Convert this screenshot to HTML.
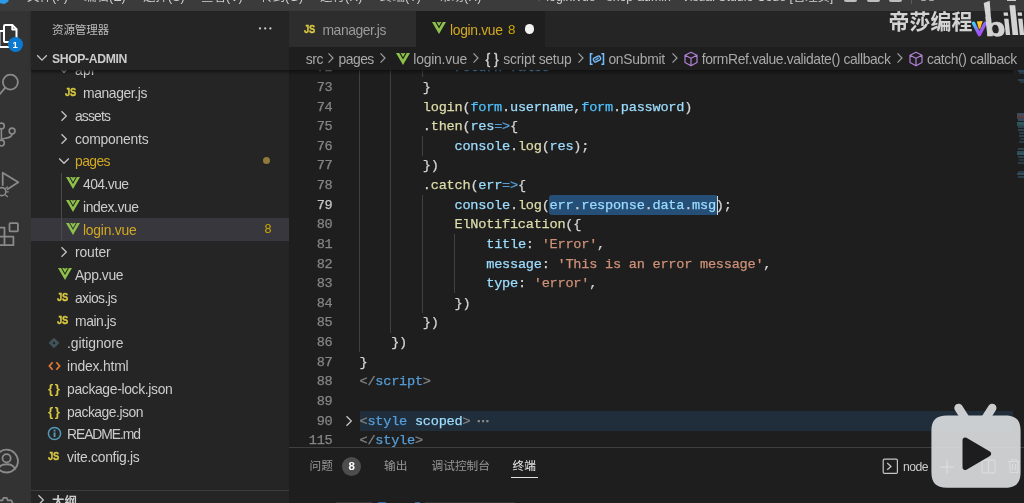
<!DOCTYPE html>
<html lang="zh-CN">
<head>
<meta charset="utf-8">
<title>login.vue - shop-admin - Visual Studio Code</title>
<style>
*{box-sizing:border-box;margin:0;padding:0}
html,body{width:1024px;height:503px;overflow:hidden;background:#1e1e1e}
body{position:relative;will-change:transform;font-family:"Liberation Sans","Noto Sans CJK SC",sans-serif;color:#ccc;-webkit-font-smoothing:antialiased}
.abs{position:absolute}
#titlebar{position:absolute;left:0;top:0;width:1024px;height:11px;background:#3b3b3c;overflow:hidden}
#titlebar span{position:absolute;top:-10.8px;font-size:12.5px;line-height:16px;color:#d0d0d0;white-space:nowrap}
#activity{position:absolute;left:0;top:11px;width:31.2px;height:492px;background:#333334;overflow:hidden}
#sidebar{position:absolute;left:31.200px;top:11px;width:257.800px;height:492px;background:#252526;overflow:hidden}
#tabs{position:absolute;left:289px;top:11px;width:735px;height:36px;background:#252526}
.tab{position:absolute;top:0;height:36px}
#crumbs{position:absolute;left:289px;top:47px;width:735px;height:23px;background:#1e1e1e;font-size:14.6px;color:#a9a9a9;white-space:nowrap}
#crumbs span{position:absolute;top:0;line-height:24px}
#crumbs svg{position:absolute}
.ic{position:absolute}
.js{font:bold 11.2px/16px "Liberation Sans",sans-serif;color:#d8c840;letter-spacing:-0.3px;transform:scaleX(.84);transform-origin:0 50%;-webkit-text-stroke:0.35px}
.json{font:bold 13.4px/18px "Liberation Sans",sans-serif;color:#d8c840;letter-spacing:1.600px}
.tl{position:absolute;font-size:13.9px;line-height:22px;white-space:nowrap}
.sel{position:absolute;left:31.200px;width:257.800px;height:22.75px;background:#37373d}
#code{position:absolute;left:0;top:0;width:1024px;height:447px;overflow:hidden}
.cl,.ln{position:absolute;font-family:"Liberation Mono","DejaVu Sans Mono",monospace;font-size:13.6px;letter-spacing:-0.2417px;line-height:19.62px;white-space:pre;color:#d4d4d4;height:19.62px;-webkit-text-stroke:0.25px}
.ln{left:289px;width:43.5px;text-align:right;color:#858585}
.ln.act{color:#c6c6c6}
.guide{position:absolute;width:1px;background:#404040}
.k{color:#569cd6}.f{color:#dcdcaa}.v{color:#9cdcfe}.c{color:#4fc1ff}.s{color:#ce9178}.p{color:#d4d4d4}.t{color:#808080}
.cur{display:inline-block;width:1.5px;height:19px;background:#d8d8d8;vertical-align:top;margin:0.3px -0.2px 0 -1.3px;position:relative;left:2px}
.selx{background:#264f78;border-radius:3px;padding:2.5px 2px 2.5px 1px;margin:0 -2px 0 -1px}
.fold{color:#8a8a8a;letter-spacing:-3.9px;margin-left:4.5px;font-weight:bold}
.foldbg{position:absolute;left:359.5px;width:653.5px;background:#202d3a}
#panel{position:absolute;left:289px;top:447px;width:735px;height:56px;background:#1e1e1e;border-top:1px solid #3f3f40}
#panel .pt{position:absolute;top:8.300px;font-size:11.7px;line-height:20px;color:#969696;white-space:nowrap}
</style>
</head>
<body>

<!-- ============ editor code ============ -->
<div id="code">
<div class="guide" style="left:358.80px;top:57.87px;height:19.62px"></div>
<div class="guide" style="left:390.48px;top:57.87px;height:19.62px"></div>
<div class="guide" style="left:422.16px;top:57.87px;height:19.62px"></div>
<div class="ln" style="top:58.37px">72</div>
<div class="cl" style="left:454.54px;top:58.37px"><span class="k">return</span> <span class="k">false</span></div>
<div class="guide" style="left:358.80px;top:77.49px;height:19.62px"></div>
<div class="guide" style="left:390.48px;top:77.49px;height:19.62px"></div>
<div class="ln" style="top:77.99px">73</div>
<div class="cl" style="left:422.86px;top:77.99px"><span class="p">}</span></div>
<div class="guide" style="left:358.80px;top:97.11px;height:19.62px"></div>
<div class="guide" style="left:390.48px;top:97.11px;height:19.62px"></div>
<div class="ln" style="top:97.61px">74</div>
<div class="cl" style="left:422.86px;top:97.61px"><span class="f">login</span><span class="p">(</span><span class="c">form</span><span class="p">.</span><span class="v">username</span><span class="p">,</span><span class="c">form</span><span class="p">.</span><span class="v">password</span><span class="p">)</span></div>
<div class="guide" style="left:358.80px;top:116.73px;height:19.62px"></div>
<div class="guide" style="left:390.48px;top:116.73px;height:19.62px"></div>
<div class="ln" style="top:117.23px">75</div>
<div class="cl" style="left:422.86px;top:117.23px"><span class="p">.</span><span class="f">then</span><span class="p">(</span><span class="v">res</span><span class="k">=&gt;</span><span class="p">{</span></div>
<div class="guide" style="left:358.80px;top:136.35px;height:19.62px"></div>
<div class="guide" style="left:390.48px;top:136.35px;height:19.62px"></div>
<div class="guide" style="left:422.16px;top:136.35px;height:19.62px"></div>
<div class="ln" style="top:136.85px">76</div>
<div class="cl" style="left:454.54px;top:136.85px"><span class="v">console</span><span class="p">.</span><span class="f">log</span><span class="p">(</span><span class="v">res</span><span class="p">);</span></div>
<div class="guide" style="left:358.80px;top:155.97px;height:19.62px"></div>
<div class="guide" style="left:390.48px;top:155.97px;height:19.62px"></div>
<div class="ln" style="top:156.47px">77</div>
<div class="cl" style="left:422.86px;top:156.47px"><span class="p">})</span></div>
<div class="guide" style="left:358.80px;top:175.59px;height:19.62px"></div>
<div class="guide" style="left:390.48px;top:175.59px;height:19.62px"></div>
<div class="ln" style="top:176.09px">78</div>
<div class="cl" style="left:422.86px;top:176.09px"><span class="p">.</span><span class="f">catch</span><span class="p">(</span><span class="v">err</span><span class="k">=&gt;</span><span class="p">{</span></div>
<div class="guide" style="left:358.80px;top:195.21px;height:19.62px"></div>
<div class="guide" style="left:390.48px;top:195.21px;height:19.62px"></div>
<div class="guide" style="left:422.16px;top:195.21px;height:19.62px"></div>
<div class="ln act" style="top:195.71px">79</div>
<div class="cl" style="left:454.54px;top:195.71px"><span class="v">console</span><span class="p">.</span><span class="f">log</span><span class="p">(</span><span class="selx"><span class="v">err</span><span class="p">.</span><span class="v">response</span><span class="p">.</span><span class="v">data</span><span class="p">.</span><span class="v">msg</span></span><span class="cur"></span><span class="p">);</span></div>
<div class="guide" style="left:358.80px;top:214.83px;height:19.62px"></div>
<div class="guide" style="left:390.48px;top:214.83px;height:19.62px"></div>
<div class="guide" style="left:422.16px;top:214.83px;height:19.62px"></div>
<div class="ln" style="top:215.33px">80</div>
<div class="cl" style="left:454.54px;top:215.33px"><span class="f">ElNotification</span><span class="p">({</span></div>
<div class="guide" style="left:358.80px;top:234.45px;height:19.62px"></div>
<div class="guide" style="left:390.48px;top:234.45px;height:19.62px"></div>
<div class="guide" style="left:422.16px;top:234.45px;height:19.62px"></div>
<div class="guide" style="left:453.84px;top:234.45px;height:19.62px"></div>
<div class="ln" style="top:234.95px">81</div>
<div class="cl" style="left:486.22px;top:234.95px"><span class="v">title</span><span class="p">: </span><span class="s">&#x27;Error&#x27;</span><span class="p">,</span></div>
<div class="guide" style="left:358.80px;top:254.07px;height:19.62px"></div>
<div class="guide" style="left:390.48px;top:254.07px;height:19.62px"></div>
<div class="guide" style="left:422.16px;top:254.07px;height:19.62px"></div>
<div class="guide" style="left:453.84px;top:254.07px;height:19.62px"></div>
<div class="ln" style="top:254.57px">82</div>
<div class="cl" style="left:486.22px;top:254.57px"><span class="v">message</span><span class="p">: </span><span class="s">&#x27;This is an error message&#x27;</span><span class="p">,</span></div>
<div class="guide" style="left:358.80px;top:273.69px;height:19.62px"></div>
<div class="guide" style="left:390.48px;top:273.69px;height:19.62px"></div>
<div class="guide" style="left:422.16px;top:273.69px;height:19.62px"></div>
<div class="guide" style="left:453.84px;top:273.69px;height:19.62px"></div>
<div class="ln" style="top:274.19px">83</div>
<div class="cl" style="left:486.22px;top:274.19px"><span class="v">type</span><span class="p">: </span><span class="s">&#x27;error&#x27;</span><span class="p">,</span></div>
<div class="guide" style="left:358.80px;top:293.31px;height:19.62px"></div>
<div class="guide" style="left:390.48px;top:293.31px;height:19.62px"></div>
<div class="guide" style="left:422.16px;top:293.31px;height:19.62px"></div>
<div class="ln" style="top:293.81px">84</div>
<div class="cl" style="left:454.54px;top:293.81px"><span class="p">})</span></div>
<div class="guide" style="left:358.80px;top:312.93px;height:19.62px"></div>
<div class="guide" style="left:390.48px;top:312.93px;height:19.62px"></div>
<div class="ln" style="top:313.43px">85</div>
<div class="cl" style="left:422.86px;top:313.43px"><span class="p">})</span></div>
<div class="guide" style="left:358.80px;top:332.55px;height:19.62px"></div>
<div class="ln" style="top:333.05px">86</div>
<div class="cl" style="left:391.18px;top:333.05px"><span class="p">})</span></div>
<div class="ln" style="top:352.67px">87</div>
<div class="cl" style="left:359.50px;top:352.67px"><span class="p">}</span></div>
<div class="ln" style="top:372.29px">88</div>
<div class="cl" style="left:359.50px;top:372.29px"><span class="t">&lt;/</span><span class="k">script</span><span class="t">&gt;</span></div>
<div class="ln" style="top:391.91px">89</div>
<div class="foldbg" style="top:411.03px;height:19.62px"></div>
<svg class="ic" style="left:344px;top:414.84px" width="10" height="12" viewBox="0 0 10 12"><path d="M2.5 1.2L7.3 6 2.5 10.8" fill="none" stroke="#c5c5c5" stroke-width="1.3"/></svg>
<div class="ln" style="top:411.53px">90</div>
<div class="cl" style="left:359.50px;top:411.53px"><span class="t">&lt;</span><span class="k">style</span> <span class="v">scoped</span><span class="t">&gt;</span><span class="fold">···</span></div>
<div class="ln" style="top:431.15px">115</div>
<div class="cl" style="left:359.50px;top:431.15px"><span class="t">&lt;/</span><span class="k">style</span><span class="t">&gt;</span></div>
</div>

<!-- ============ title bar ============ -->
<div id="titlebar">
  <svg class="abs" style="left:0;top:0" width="9" height="4" viewBox="0 0 9 4"><path d="M0 0h8.5v1.6L4.5 4 0 3.2z" fill="#2b9ae8"/></svg>
  <span style="left:27px">文件(F)</span>
  <span style="left:84px">编辑(E)</span>
  <span style="left:143px">选择(S)</span>
  <span style="left:201px">查看(V)</span>
  <span style="left:260px">转到(G)</span>
  <span style="left:320px">运行(R)</span>
  <span style="left:380px">终端(T)</span>
  <span style="left:439px">帮助(H)</span>
  <span style="left:535.5px;font-size:12.3px">● login.vue - shop-admin - Visual Studio Code [管理员]</span>
  <!-- layout control remnants -->
  <div class="abs" style="left:844px;top:0;width:13px;height:1.600px;background:#bdbdbd;border-radius:0 0 2px 2px"></div>
  <div class="abs" style="left:866.500px;top:0;width:13px;height:1.600px;background:#bdbdbd;border-radius:0 0 2px 2px"></div>
  <div class="abs" style="left:889px;top:0;width:13px;height:1.600px;background:#bdbdbd;border-radius:0 0 2px 2px"></div>
  <div class="abs" style="left:911px;top:0;width:1px;height:3.500px;background:#5a5a5a"></div>
  <div class="abs" style="left:921px;top:0;width:5px;height:1.400px;background:#a8a8a8;border-radius:0 0 2px 2px"></div>
  <div class="abs" style="left:929px;top:0;width:5px;height:1.400px;background:#a8a8a8;border-radius:0 0 2px 2px"></div>
  <div class="abs" style="left:1007px;top:0;width:9px;height:1.200px;background:#c8c8c8"></div>
</div>

<!-- ============ activity bar ============ -->
<div id="activity">
<svg class="abs" style="left:0;top:0" width="31.200" height="492" viewBox="0 11 31.200 492" fill="none" stroke="#8a8a8a" stroke-width="1.800" stroke-linejoin="round" stroke-linecap="round">
  <!-- files (active) -->
  <g stroke="#ffffff" stroke-width="2">
    <path d="M5.200 25h7.300l4 4.200v11.600c0 .8-.4 1.200-1.200 1.200h-10.100c-.8 0-1.200-.4-1.200-1.200v-14.600c0-.8.400-1.200 1.200-1.200z"/>
    <path d="M12.300 25.200v4.200h4"/>
    <path d="M3.800 30.800h-3.200c-.8 0-1.200.4-1.200 1.200v13.600c0 .8.400 1.200 1.200 1.200h9.400c.8 0 1.200-.4 1.200-1.200v-3.400"/>
  </g>
  <!-- search -->
  <circle cx="10.400" cy="82" r="7.500"/>
  <path d="M5.300 87.600L-2 96"/>
  <!-- scm -->
  <circle cx="1.400" cy="126" r="2.900" stroke-width="1.600"/>
  <circle cx="12.100" cy="131" r="2.900" stroke-width="1.600"/>
  <circle cx="1.400" cy="143" r="2.900" stroke-width="1.600"/>
  <path d="M1.400 129v11M12.100 134c0 4.200-6 3.600-10.700 5.200" stroke-width="1.600"/>
  <!-- debug -->
  <path d="M2.700 185v-12.300l15.600 9.600-10.800 6.900"/>
  <circle cx="1.800" cy="191.600" r="4" fill="#333334" stroke-width="1.600"/>
  <path d="M5.400 188.400l2-1.500M6 191.800h2.300M5.400 195l2 1.500" stroke-width="1.300"/>
  <!-- extensions -->
  <rect x="9.500" y="223.200" width="8.400" height="8.200" rx="1"/>
  <path d="M-5 227.700h9.500v17.500h-9.500M4.500 236.600h8.900v8.600h-8.900M-5 236.600h9.500"/>
  <!-- account -->
  <circle cx="6.600" cy="461.200" r="11.400"/>
  <circle cx="6.600" cy="458.300" r="4.100"/>
  <path d="M-1.600 469.200c1.500-6.500 14.900-6.500 16.400 0"/>
  <!-- gear (cropped) -->
  <path d="M-1 503v-2.600h3.600l.8-2.400h3.400l.8 2.400h3.800l1.200 2.600" stroke-width="1.700"/>
</svg>
<div class="abs" style="left:7.500px;top:25.500px;width:15.500px;height:15.500px;border-radius:50%;background:#0a7ad1;color:#fff;font:bold 9.500px/15.500px 'Liberation Sans',sans-serif;text-align:center">1</div>
</div>

<!-- ============ sidebar ============ -->
<div id="sidebar"></div>
<div id="tree">
<svg class="ic" style="left:58px;top:65.2px" width="12" height="10" viewBox="0 0 12 10"><path d="M1.2 2.5L6 7.3 10.8 2.5" fill="none" stroke="#c5c5c5" stroke-width="1.3"/></svg>
<span class="tl" style="left:75px;top:59.25px;color:#cccccc;letter-spacing:0.317px">api</span>
<span class="ic js" style="left:65px;top:84.2px">JS</span>
<span class="tl" style="left:83px;top:82.00px;color:#cccccc;letter-spacing:-0.399px">manager.js</span>
<svg class="ic" style="left:59px;top:109.8px" width="10" height="12" viewBox="0 0 10 12"><path d="M2.5 1.2L7.3 6 2.5 10.8" fill="none" stroke="#c5c5c5" stroke-width="1.3"/></svg>
<span class="tl" style="left:75px;top:104.75px;color:#cccccc;letter-spacing:-0.862px">assets</span>
<svg class="ic" style="left:59px;top:132.5px" width="10" height="12" viewBox="0 0 10 12"><path d="M2.5 1.2L7.3 6 2.5 10.8" fill="none" stroke="#c5c5c5" stroke-width="1.3"/></svg>
<span class="tl" style="left:75px;top:127.50px;color:#cccccc;letter-spacing:-0.222px">components</span>
<svg class="ic" style="left:58px;top:156.2px" width="12" height="10" viewBox="0 0 12 10"><path d="M1.2 2.5L6 7.3 10.8 2.5" fill="none" stroke="#c5c5c5" stroke-width="1.3"/></svg>
<span class="tl" style="left:75px;top:150.25px;color:#d2a822;letter-spacing:-0.574px">pages</span>
<svg class="ic" style="left:65.5px;top:177.4px" width="14" height="12" viewBox="0 0 14 12"><path d="M0 0h3L7 6.900 11 0H14L7 12z" fill="#8dc149"/><path d="M4.200 0h2.100L7 1.200 7.700 0h2.100L7 4.900z" fill="#8dc149"/></svg>
<span class="tl" style="left:83px;top:173.00px;color:#cccccc;letter-spacing:-0.566px">404.vue</span>
<svg class="ic" style="left:65.5px;top:200.20000000000002px" width="14" height="12" viewBox="0 0 14 12"><path d="M0 0h3L7 6.900 11 0H14L7 12z" fill="#8dc149"/><path d="M4.200 0h2.100L7 1.200 7.700 0h2.100L7 4.900z" fill="#8dc149"/></svg>
<span class="tl" style="left:83px;top:195.75px;color:#cccccc;letter-spacing:-0.445px">index.vue</span>
<div class="sel" style="top:218.10px"></div>
<svg class="ic" style="left:65.5px;top:222.9px" width="14" height="12" viewBox="0 0 14 12"><path d="M0 0h3L7 6.900 11 0H14L7 12z" fill="#8dc149"/><path d="M4.200 0h2.100L7 1.200 7.700 0h2.100L7 4.900z" fill="#8dc149"/></svg>
<span class="tl" style="left:83px;top:218.50px;color:#d2a822;letter-spacing:-0.238px">login.vue</span>
<svg class="ic" style="left:59px;top:246.2px" width="10" height="12" viewBox="0 0 10 12"><path d="M2.5 1.2L7.3 6 2.5 10.8" fill="none" stroke="#c5c5c5" stroke-width="1.3"/></svg>
<span class="tl" style="left:75px;top:241.25px;color:#cccccc;letter-spacing:-0.135px">router</span>
<svg class="ic" style="left:57.5px;top:268.4px" width="14" height="12" viewBox="0 0 14 12"><path d="M0 0h3L7 6.900 11 0H14L7 12z" fill="#8dc149"/><path d="M4.200 0h2.100L7 1.200 7.700 0h2.100L7 4.900z" fill="#8dc149"/></svg>
<span class="tl" style="left:75px;top:264.00px;color:#cccccc;letter-spacing:-0.429px">App.vue</span>
<span class="ic js" style="left:57px;top:289.0px">JS</span>
<span class="tl" style="left:75px;top:286.75px;color:#cccccc;letter-spacing:-0.606px">axios.js</span>
<span class="ic js" style="left:57px;top:311.7px">JS</span>
<span class="tl" style="left:75px;top:309.50px;color:#cccccc;letter-spacing:-0.433px">main.js</span>
<svg class="ic" style="left:48px;top:337.2px" width="12" height="12" viewBox="0 0 12 12"><rect x="2.2" y="2.2" width="7.6" height="7.6" transform="rotate(45 6 6)" fill="#41535b"/><circle cx="6" cy="6" r="1.3" fill="#252526"/></svg>
<span class="tl" style="left:67px;top:332.25px;color:#cccccc;letter-spacing:-0.068px">.gitignore</span>
<svg class="ic" style="left:48px;top:361.0px" width="13" height="10" viewBox="0 0 13 10"><path d="M4.6 1.2L1.4 5l3.2 3.8M8.4 1.2L11.6 5 8.4 8.8" fill="none" stroke="#e37933" stroke-width="1.7"/></svg>
<span class="tl" style="left:67px;top:355.00px;color:#cccccc;letter-spacing:-0.185px">index.html</span>
<span class="ic json" style="left:48px;top:379.8px">{}</span>
<span class="tl" style="left:67px;top:377.75px;color:#cccccc;letter-spacing:-0.339px">package-lock.json</span>
<span class="ic json" style="left:48px;top:402.5px">{}</span>
<span class="tl" style="left:67px;top:400.50px;color:#cccccc;letter-spacing:-0.493px">package.json</span>
<svg class="ic" style="left:46.5px;top:426.4px" width="15" height="15" viewBox="0 0 15 15"><circle cx="7.500" cy="7.500" r="6.100" fill="none" stroke="#519aba" stroke-width="1.500"/><rect x="6.600" y="6.400" width="1.900" height="4.600" fill="#519aba"/><rect x="6.600" y="3.700" width="1.900" height="1.800" fill="#519aba"/></svg>
<span class="tl" style="left:67px;top:423.25px;color:#cccccc;letter-spacing:-1.071px">README.md</span>
<span class="ic js" style="left:48px;top:448.2px">JS</span>
<span class="tl" style="left:67px;top:446.00px;color:#cccccc;letter-spacing:-0.285px">vite.config.js</span>
  <div class="abs" style="left:60.5px;top:173px;width:1px;height:68px;background:#4a4a4a"></div>
  <!-- modified dot on pages -->
  <div class="abs" style="left:263px;top:157px;width:7px;height:7px;border-radius:50%;background:#8f7a3b"></div>
  <span class="tl" style="left:264.5px;top:218px;color:#cca700;font-size:12.6px">8</span>
</div>
<!-- sidebar header (over tree) -->
<div class="abs" style="left:31.200px;top:11px;width:257.800px;height:58.800px;background:#252526;box-shadow:0 2px 3px -1px rgba(0,0,0,.5)"></div>
<div class="abs" style="left:31.200px;top:69.800px;width:257.800px;height:4px;background:linear-gradient(rgba(20,20,21,.7),rgba(37,37,38,0))"></div>
<span class="abs" style="left:52px;top:19.7px;font-size:11.6px;line-height:20px;color:#bbbbbb;letter-spacing:-0.2px">资源管理器</span>
<svg class="abs" style="left:256px;top:24px" width="20" height="9" viewBox="256 24 20 9" fill="#c8c8c8"><circle cx="260" cy="28.400" r="1.150"/><circle cx="265.200" cy="28.400" r="1.150"/><circle cx="270.400" cy="28.400" r="1.150"/></svg>
<svg class="abs" style="left:36px;top:53px" width="12" height="10" viewBox="0 0 12 10"><path d="M1.2 2.3L6 7.1 10.8 2.3" fill="none" stroke="#c5c5c5" stroke-width="1.3"/></svg>
<span class="abs" style="left:52px;top:48.8px;font-size:12.2px;letter-spacing:-0.362px;font-weight:bold;line-height:20px;color:#cccccc">SHOP-ADMIN</span>
<!-- partially hidden "api" row bottom -->
<!-- outline section -->
<div class="abs" style="left:31.200px;top:490px;width:257.800px;height:13px;background:#252526;border-top:1px solid #3c3c3d"></div>
<svg class="abs" style="left:36px;top:494px" width="10" height="12" viewBox="0 0 10 12"><path d="M2.5 1.2L7.3 6 2.5 10.8" fill="none" stroke="#c5c5c5" stroke-width="1.3"/></svg>
<span class="abs" style="left:52px;top:492px;font-size:12.4px;font-weight:bold;line-height:20px;color:#cccccc">大纲</span>

<!-- ============ tabs ============ -->
<div id="tabs">
  <div class="tab" style="left:0;width:127px;background:#2d2d2d">
    <span class="ic js" style="left:15px;top:10px">JS</span>
    <span class="abs" style="left:33.5px;top:8.3px;font-size:13.9px;letter-spacing:-0.449px;line-height:22px;color:#9b9b9b;white-space:nowrap">manager.js</span>
  </div>
  <div class="tab" style="left:127px;width:129px;background:#1e1e1e">
    <svg class="ic" style="left:15.500px;top:11.200px" width="14" height="12" viewBox="0 0 14 12"><path d="M0 0h3.2L7 6.6 10.8 0H14L7 12z" fill="#8dc149"/><path d="M4.6 0h1.9L7 0.9 7.5 0h1.9L7 4.2z" fill="#8dc149"/></svg>
    <span class="abs" style="left:34px;top:8.3px;font-size:13.9px;letter-spacing:-0.327px;line-height:22px;color:#d2a822;white-space:nowrap">login.vue</span>
    <span class="abs" style="left:92px;top:8px;font-size:13.4px;line-height:22px;color:#cca700">8</span>
    <div class="abs" style="left:108.800px;top:13.300px;width:9.400px;height:9.400px;border-radius:50%;background:#f2f2f2"></div>
  </div>
</div>

<!-- ============ breadcrumbs ============ -->
<div id="crumbs">
  <span style="left:16.8px;font-size:13.9px;letter-spacing:-0.443px">src</span>
  <svg style="left:37px;top:5.300px" width="10" height="12" viewBox="0 0 10 12"><path d="M2.500 1.400L7 6 2.500 10.600" fill="none" stroke="#a0a0a0" stroke-width="1.200"/></svg>
  <span style="left:49.6px;font-size:13.9px;letter-spacing:-0.534px">pages</span>
  <svg style="left:89px;top:5.300px" width="10" height="12" viewBox="0 0 10 12"><path d="M2.500 1.400L7 6 2.500 10.600" fill="none" stroke="#a0a0a0" stroke-width="1.200"/></svg>
  <svg style="left:107px;top:6px" width="14" height="12" viewBox="0 0 14 12"><path d="M0 0h3.2L7 6.6 10.8 0H14L7 12z" fill="#8dc149"/><path d="M4.6 0h1.9L7 0.9 7.5 0h1.9L7 4.2z" fill="#8dc149"/></svg>
  <span style="left:124.3px;font-size:13.9px;letter-spacing:-0.216px">login.vue</span>
  <svg style="left:182px;top:5.300px" width="10" height="12" viewBox="0 0 10 12"><path d="M2.500 1.400L7 6 2.500 10.600" fill="none" stroke="#a0a0a0" stroke-width="1.200"/></svg>
  <span style="left:196.400px;color:#d0d0d0;letter-spacing:3.900px;font-size:14.200px;-webkit-text-stroke:.3px">{}</span>
  <span style="left:214.3px;font-size:13.9px;letter-spacing:-0.240px">script setup</span>
  <svg style="left:287px;top:5.300px" width="10" height="12" viewBox="0 0 10 12"><path d="M2.500 1.400L7 6 2.500 10.600" fill="none" stroke="#a0a0a0" stroke-width="1.200"/></svg>
  <!-- variable icon -->
  <svg style="left:300px;top:5px" width="16" height="14" viewBox="0 0 16 14" fill="none" stroke="#75beff"><path d="M3.600 1.700H1.500v10.600h2.100M12.400 1.700h2.100v10.600h-2.100" stroke-width="1.500"/><rect x="4.400" y="4.900" width="7.200" height="4.200" rx="1.300" transform="rotate(-27 8 7)" stroke-width="1.400"/><path d="M6.300 7.900l3.400-1.800" stroke-width="1.100"/></svg>
  <span style="left:319.4px;font-size:13.9px;letter-spacing:-0.265px">onSubmit</span>
  <svg style="left:381px;top:5.300px" width="10" height="12" viewBox="0 0 10 12"><path d="M2.500 1.400L7 6 2.500 10.600" fill="none" stroke="#a0a0a0" stroke-width="1.200"/></svg>
  <svg style="left:394px;top:4px" width="16" height="16" viewBox="0 0 16 16"><path d="M8 1.3l6 2.9v7.3l-6 3.2-6-3.2V4.2zM2 4.2l6 3 6-3M8 7.2v7.5" fill="none" stroke="#b180d7" stroke-width="1.2" stroke-linejoin="round"/></svg>
  <span style="left:412.8px;font-size:13.9px;letter-spacing:-0.389px">formRef.value.validate() callback</span>
  <svg style="left:606px;top:5.300px" width="10" height="12" viewBox="0 0 10 12"><path d="M2.500 1.400L7 6 2.500 10.600" fill="none" stroke="#a0a0a0" stroke-width="1.200"/></svg>
  <svg style="left:619px;top:4px" width="16" height="16" viewBox="0 0 16 16"><path d="M8 1.3l6 2.9v7.3l-6 3.2-6-3.2V4.2zM2 4.2l6 3 6-3M8 7.2v7.5" fill="none" stroke="#b180d7" stroke-width="1.2" stroke-linejoin="round"/></svg>
  <span style="left:637.9px;font-size:13.9px;letter-spacing:-0.410px">catch() callback</span>
</div>
<div class="abs" style="left:289px;top:70px;width:724px;height:5px;background:linear-gradient(rgba(0,0,0,.45),rgba(0,0,0,0))"></div>

<!-- ============ watermark ============ -->
<span class="abs" style="left:888.6px;top:7.3px;font-size:20.9px;line-height:30px;font-weight:bold;color:rgba(255,255,255,.8);white-space:nowrap;letter-spacing:0.1px">帝莎编程</span>
<svg class="abs" style="left:968px;top:0" width="56" height="40" viewBox="968 0 56 40" font-family="Liberation Sans, sans-serif" font-weight="bold">
  <defs>
    <linearGradient id="vg" x1="0" y1="0" x2="1" y2="1"><stop offset="0" stop-color="#41d1ff"/><stop offset=".45" stop-color="#8a6cf6"/><stop offset="1" stop-color="#bd34fe"/></linearGradient>
    <linearGradient id="vy" x1="0" y1="0" x2="0" y2="1"><stop offset="0" stop-color="#ffd62e"/><stop offset="1" stop-color="#ffa800"/></linearGradient>
  </defs>
  <!-- vite mark -->
  <path d="M973.600 23.300L979.400 34.600 985.200 23.300" fill="none" stroke="url(#vg)" stroke-width="3.400" stroke-linejoin="round" stroke-linecap="round"/>
  <path d="M976.800 21.600l5.800-.6-2.300 7.800-1.500.2z" fill="url(#vy)"/>
  <!-- bilibili wordmark: real text letters + stem extension -->
  <g fill="#fff" opacity=".8" transform="skewX(6)">
    <text transform="translate(981.800 35.600) scale(1.300 1)" font-size="26" stroke="#fff" stroke-width=".7">b</text>
    <path d="M983.400 3l6.200-2.200-.600 20h-5z"/>
    <text x="1000" y="35" font-size="31">i</text>
    <text x="1006.200" y="34.500" font-size="41">l</text>
    <text x="1014" y="35" font-size="31">i</text>
  </g>
</svg>

<!-- ============ minimap bits ============ -->
<div class="abs" style="left:1013px;top:60px;width:11px;height:387px;overflow:hidden;opacity:.6">
  <div class="abs" style="left:5px;top:10px;width:6px;height:1.6px;background:#2f5d78"></div>
  <div class="abs" style="left:6px;top:12px;width:5px;height:1.6px;background:#2b4a5e"></div>
  <div class="abs" style="left:5px;top:19px;width:6px;height:1.6px;background:#35586c"></div>
  <div class="abs" style="left:7px;top:21px;width:4px;height:1.6px;background:#2d4656"></div>
  <div class="abs" style="left:4px;top:53px;width:7px;height:1.6px;background:#4a6f86"></div>
  <div class="abs" style="left:4px;top:55px;width:7px;height:1.6px;background:#7a5a6a"></div>
  <div class="abs" style="left:4px;top:57px;width:7px;height:1.6px;background:#6e5563"></div>
  <div class="abs" style="left:5px;top:59px;width:6px;height:1.6px;background:#3f6b84"></div>
  <div class="abs" style="left:4px;top:62px;width:7px;height:1.6px;background:#3f7f8a"></div>
  <div class="abs" style="left:4px;top:64px;width:7px;height:1.6px;background:#37707c"></div>
  <div class="abs" style="left:5px;top:66px;width:6px;height:1.6px;background:#35586c"></div>
  <div class="abs" style="left:5px;top:69px;width:6px;height:1.6px;background:#3a6076"></div>
  <div class="abs" style="left:6px;top:72px;width:5px;height:1.6px;background:#32505f"></div>
  <div class="abs" style="left:6px;top:75px;width:5px;height:1.6px;background:#35586c"></div>
  <div class="abs" style="left:7px;top:78px;width:4px;height:1.6px;background:#2f4a5a"></div>
  <div class="abs" style="left:6px;top:81px;width:5px;height:1.6px;background:#32505f"></div>
  <div class="abs" style="left:5px;top:88px;width:6px;height:1.6px;background:#35586c"></div>
  <div class="abs" style="left:4px;top:91px;width:7px;height:1.6px;background:#3f6b84"></div>
  <div class="abs" style="left:4px;top:93px;width:7px;height:1.6px;background:#3a7f8c"></div>
  <div class="abs" style="left:5px;top:96px;width:6px;height:1.6px;background:#35586c"></div>
  <div class="abs" style="left:6px;top:99px;width:5px;height:1.6px;background:#2f4a5a"></div>
  <div class="abs" style="left:5px;top:102px;width:6px;height:1.6px;background:#32505f"></div>
  <div class="abs" style="left:5px;top:111px;width:6px;height:1.6px;background:#32505f"></div>
  <div class="abs" style="left:4px;top:113px;width:7px;height:1.6px;background:#3f6b84"></div>
  <div class="abs" style="left:5px;top:116px;width:6px;height:1.6px;background:#35586c"></div>
</div>

<!-- ============ panel ============ -->
<div id="panel">
  <span class="pt" style="left:20.5px">问题</span>
  <div class="abs" style="left:53.300px;top:8.700px;width:19px;height:19px;border-radius:50%;background:#4d4d4d;color:#fff;font:bold 11.5px/19px 'Liberation Sans',sans-serif;text-align:center">8</div>
  <span class="pt" style="left:95px">输出</span>
  <span class="pt" style="left:142.5px">调试控制台</span>
  <span class="pt" style="left:223.5px;color:#e7e7e7">终端</span>
  <div class="abs" style="left:222px;top:29px;width:27px;height:1.200px;background:#e0e0e0"></div>
  <!-- right actions -->
  <svg class="abs" style="left:593px;top:10px" width="17" height="17" viewBox="0 0 17 17"><rect x="1.2" y="1.2" width="14.2" height="14.2" rx="1.2" fill="none" stroke="#c5c5c5" stroke-width="1.2"/><path d="M5.2 5l3.8 3.4-3.8 3.4" fill="none" stroke="#c5c5c5" stroke-width="1.3"/></svg>
  <span class="abs" style="left:614px;top:9.3px;font-size:12.2px;letter-spacing:-0.535px;line-height:20px;color:#cccccc">node</span>
  <svg class="abs" style="left:650px;top:11px" width="16" height="16" viewBox="0 0 16 16"><path d="M8 1.5v13M1.5 8h13" stroke="#c5c5c5" stroke-width="1.3"/></svg>
  <svg class="abs" style="left:671px;top:15px" width="10" height="8" viewBox="0 0 10 8"><path d="M1.5 2l3.5 3.5L8.5 2" fill="none" stroke="#c5c5c5" stroke-width="1.1"/></svg>
  <svg class="abs" style="left:692px;top:11px" width="15" height="15" viewBox="0 0 15 15"><rect x="1" y="1.2" width="13" height="12.6" rx="1" fill="none" stroke="#c5c5c5" stroke-width="1.2"/><path d="M7.5 1.2v12.6" stroke="#c5c5c5" stroke-width="1.2"/></svg>
  <svg class="abs" style="left:718px;top:10px" width="14" height="16" viewBox="0 0 14 16"><path d="M1 3.5h12M4.5 3.5V1.8h5v1.7M2.5 3.5l.7 11h7.6l.7-11M5.5 6v6M8.5 6v6" fill="none" stroke="#c5c5c5" stroke-width="1.1"/></svg>
  <div class="abs" style="left:89px;top:53.800px;width:8px;height:1.200px;background:#2b6aa5"></div>
  <div class="abs" style="left:126px;top:53.800px;width:4.500px;height:1.200px;background:#2b6aa5"></div>
  <div class="abs" style="left:47px;top:54.200px;width:36px;height:.8px;background:#3a3a3a"></div>
  <div class="abs" style="left:136px;top:54.200px;width:90px;height:.8px;background:#333"></div>
</div>

<!-- ============ bilibili play overlay ============ -->
<svg class="abs" style="left:926px;top:400px" width="98" height="92" viewBox="0 0 98 92">
  <g fill="#dcdee0" stroke="#dcdee0" opacity=".91">
    <path d="M21 15.500h58c11 0 15.600 4.600 15.600 15.600v41c0 11-4.600 15.600-15.600 15.600h-58c-11 0-15.600-4.600-15.600-15.600v-41c0-11 4.600-15.600 15.600-15.600z" stroke="none"/>
    <path d="M32.600 8l7 11M66.200 8l-7 11" stroke-width="8.600" stroke-linecap="round" fill="none"/>
  </g>
  <path d="M36.500 40v27.500a2.600 2.600 0 0 0 3.900 2.200l23.500-13.700a2.600 2.600 0 0 0 0-4.500l-23.500-13.700a2.600 2.600 0 0 0-3.900 2.200z" fill="#1d1d1f"/>
</svg>

</body>
</html>
